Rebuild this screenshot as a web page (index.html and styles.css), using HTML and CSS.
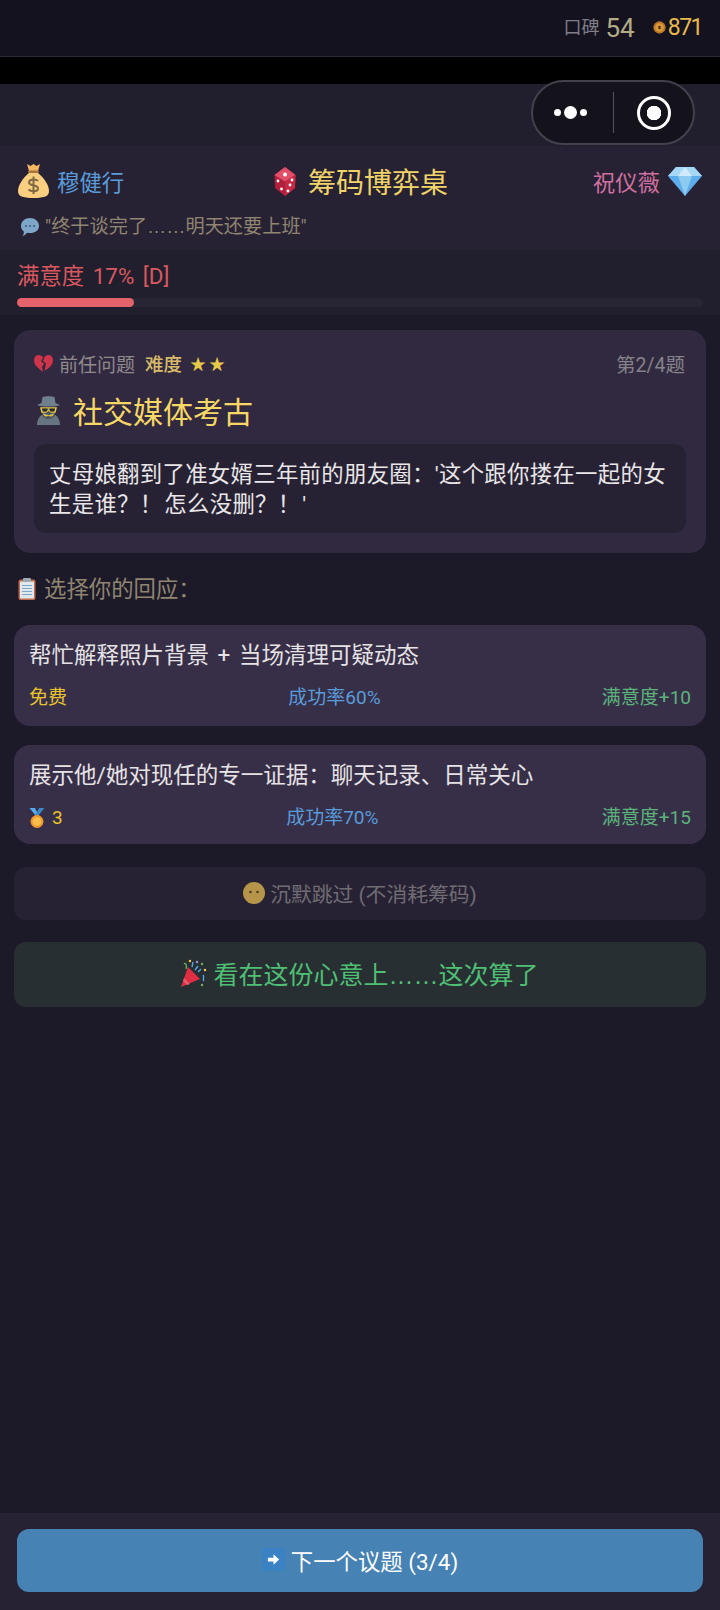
FILE: index.html
```html
<html>
  <head>
    <meta charset="utf-8">
    <link rel="stylesheet" href="styles.css">
  </head>
  <body>
    <div class="app">
      <div class="topbar">
        <span class="rep-label">口碑</span>
        <span class="rep-value">54</span>
        <svg class="ico-coin" viewBox="0 0 12 12"><circle cx="6" cy="6" r="5.700" fill="#b8742a"/><circle cx="6" cy="6" r="4" fill="#dc9a35"/><rect x="5" y="4.500" width="2" height="3" fill="#4a2c10"/></svg>
        <span class="coin-value">871</span>
      </div>
      <div class="blackstrip"></div>
      <div class="navgap"></div>

      <!-- wechat capsule -->
      <div class="capsule">
        <div class="capsule__dots"><i></i><i class="big"></i><i></i></div>
        <div class="capsule__line"></div>
        <div class="capsule__target"><i></i></div>
      </div>

      <header class="table-head">
        <div class="table-head__row">
          <div class="player">
            <svg class="ico-bag" viewBox="0 0 31 34">
              <path d="M9 0 L12.500 2 L15.500 0 L18.500 2 L22 0 L20 7 H11 Z" fill="#f4b860"/>
              <rect x="10" y="6.500" width="11" height="2.500" rx="1" fill="#a9743c"/>
              <path d="M11 9 C5 14 0 21 0 27 C0 32 4 34 15.500 34 C27 34 31 32 31 27 C31 21 26 14 20 9 Z" fill="#fbcf7f"/>
              <path d="M15.500 12.500 V30 M20 17 C18 14.500 11 15 11 18.500 C11 22.500 20 20 20 24.500 C20 28 13 28 10.500 25.500" fill="none" stroke="#7f6a45" stroke-width="2"/>
            </svg>
            <span class="player__name player__name--blue">穆健行</span>
          </div>
          <div class="table-title">
            <svg class="ico-die" viewBox="0 0 22 29">
              <path d="M11 0 L21.500 8 L21 21 L11 29 L1 21 L0.500 8 Z" fill="#b01f3c"/>
              <path d="M11 0 L21.500 8 L11 14.500 L0.500 8 Z" fill="#e24f68"/>
              <path d="M11 14.500 L21.500 8 L21 21 L11 29 Z" fill="#c42843"/>
              <circle cx="11" cy="7.500" r="2" fill="#fff"/><circle cx="4" cy="14" r="1.400" fill="#fff"/><circle cx="7.500" cy="22" r="1.400" fill="#fff"/><circle cx="18" cy="13" r="1.400" fill="#fff"/><circle cx="16" cy="18" r="1.400" fill="#fff"/><circle cx="14" cy="24" r="1.400" fill="#fff"/>
            </svg>
            <span>筹码博弈桌</span>
          </div>
          <div class="player">
            <span class="player__name player__name--pink">祝仪薇</span>
            <svg class="ico-gem" viewBox="0 0 34 29">
              <path d="M8 0 H26 L34 9 L17 29 L0 9 Z" fill="#5dadec"/>
              <path d="M8 0 H26 L34 9 H0 Z" fill="#a6d8f5"/>
              <path d="M10 9 H24 L17 29 Z" fill="#8ccaf0"/>
              <path d="M17 0 L24 9 H10 Z" fill="#cfeafb"/>
            </svg>
          </div>
        </div>
        <div class="quote">
          <svg class="ico-bubble" viewBox="0 0 20 20"><path d="M10 1 C15 1 19 4.500 19 9 C19 13.500 15 16 10 16 C9 16 8 16 7 15.700 C6 17 4.500 18.500 2.500 19 C3.500 17.500 4 16 3.800 14.500 C2 13 1 11 1 9 C1 4.500 5 1 10 1 Z" fill="#7ea6c8"/><circle cx="6" cy="9" r="1" fill="#3d5a75"/><circle cx="10" cy="9" r="1" fill="#3d5a75"/><circle cx="14" cy="9" r="1" fill="#3d5a75"/></svg>
          <span>"终于谈完了<span class="dots">……</span>明天还要上班"</span>
        </div>
      </header>

      <section class="satisfaction">
        <div class="satisfaction__label">满意度 17% [D]</div>
        <div class="satisfaction__track"><div class="satisfaction__fill" style="width:17%"></div></div>
      </section>

      <main class="content">
        <section class="issue">
          <div class="issue__meta">
            <div class="issue__tags">
              <svg class="ico-heart" viewBox="0 0 19 17"><path d="M9 17 C4 13 0 10 0 5 C0 2 2 0 4.500 0 C6.500 0 8 1 9 2.500 L7 6.500 L10 8.500 L8 12 Z" fill="#d0344a"/><path d="M10.500 16 C15 13 19 10 19 5 C19 2 17 0 14.500 0 C13 0 11.500 .8 10.500 2 L9 6 L12 8.500 Z" fill="#d0344a"/></svg>
              <span class="issue__type">前任问题</span>
              <span class="issue__level">难度</span>
              <span class="issue__stars">★★</span>
            </div>
            <span class="issue__count">第2/4题</span>
          </div>
          <h2 class="issue__title">
            <svg class="ico-spy" viewBox="0 0 25 29">
              <path d="M1 29 C1 21 6 17 12.500 17 C19 17 24 21 24 29 Z" fill="#66757f"/>
              <path d="M6 12 H19 V18 C19 21 15 23 12.500 23 C10 23 6 21 6 18 Z" fill="#4b5660"/>
              <path d="M5.500 7 L6.500 1 C9 0 16 0 18.500 1 L19.500 7 L24 9 C20 11 5 11 1 9 Z" fill="#6f7f8c"/>
              <path d="M5 12 H20 L19 16 H15 L12.500 14 L10 16 H6 Z" fill="none" stroke="#e8c84a" stroke-width="1.500"/>
              <path d="M6 12.500 H11.500 L11 15.500 H7 Z M13.500 12.500 H19 L18 15.500 H14 Z" fill="#2b2b2b"/>
              <path d="M7 17 C10 19.500 15 19.500 18 17 C17.500 20.500 15 21.500 12.500 19.500 C10 21.500 7.500 20.500 7 17 Z" fill="#e8c84a"/>
            </svg>
            <span>社交媒体考古</span>
          </h2>
          <p class="issue__text">丈母娘翻到了准女婿三年前的朋友圈：'这个跟你搂在一起的女生是谁？！ 怎么没删？！ '</p>
        </section>

        <div class="choose">
          <svg class="ico-clip" viewBox="0 0 18 22"><rect x="0.500" y="1.500" width="17" height="20.500" rx="2" fill="#c1694f"/><rect x="2" y="3.500" width="14" height="17" fill="#e1e8ed"/><rect x="5" y="0" width="8" height="4" rx="1" fill="#99aab5"/><path d="M4 7.500 H14 M4 10.500 H14 M4 13.500 H14 M4 16.500 H14" stroke="#7aa7c7" stroke-width="1.200"/></svg>
          <span>选择你的回应：</span>
        </div>

        <div class="option">
          <div class="option__text">帮忙解释照片背景 + 当场清理可疑动态</div>
          <div class="option__stats">
            <span class="option__cost">免费</span>
            <span class="option__rate">成功率60%</span>
            <span class="option__gain">满意度+10</span>
          </div>
        </div>
        <div class="option option--second">
          <div class="option__text">展示他/她对现任的专一证据：聊天记录、日常关心</div>
          <div class="option__stats">
            <span class="option__cost">
              <svg class="ico-medal" viewBox="0 0 16 20"><path d="M0.500 0 H6 L10 8 H7 Z" fill="#55acee"/><path d="M15.500 0 H10 L6 8 H9 Z" fill="#3b88c3"/><circle cx="8" cy="13.500" r="6.500" fill="#f09a2e"/><circle cx="8" cy="13.500" r="4.300" fill="#fbc04c"/></svg>
              3
            </span>
            <span class="option__rate">成功率70%</span>
            <span class="option__gain">满意度+15</span>
          </div>
        </div>

        <div class="skip">
          <svg class="ico-face" viewBox="0 0 22 22"><circle cx="11" cy="11" r="11" fill="#b5954a"/><circle cx="7.500" cy="10" r="1.300" fill="#4c3c20"/><circle cx="14.500" cy="10" r="1.300" fill="#4c3c20"/></svg>
          <span>沉默跳过 (不消耗筹码)</span>
        </div>

        <div class="forgive">
          <svg class="ico-party" viewBox="0 0 26 28">
            <path d="M0 28 L7 8 L19 20 Z" fill="#dd2e44"/>
            <path d="M3 19 L9 25 L6 26 L2 22 Z" fill="#ea596e"/>
            <path d="M3 5 C5 3 6 7 5 10" fill="none" stroke="#77b255" stroke-width="1.300"/>
            <path d="M12 3 L11 8 M17 7 L14 11 M20 10 L17 13 M22 16 C24 18 21 20 23 22" fill="none" stroke="#55acee" stroke-width="1.300"/>
            <circle cx="16" cy="3" r="1.200" fill="#aa8dd8"/><circle cx="21" cy="5" r="1.200" fill="#77b255"/><circle cx="24" cy="11" r="1.200" fill="#ffcc4d"/><circle cx="21" cy="26" r="1.200" fill="#77b255"/><circle cx="9" cy="2" r="1.200" fill="#ffcc4d"/>
          </svg>
          <span>看在这份心意上<span class="dots">……</span>这次算了</span>
        </div>
      </main>

      <footer class="footer">
        <button class="next">
          <span class="next__arrow"><svg viewBox="0 0 16 16"><path d="M2 6 H8 V2.500 L14 8 L8 13.500 V10 H2 Z" fill="#fff"/></svg></span>
          <span>下一个议题 (3/4)</span>
        </button>
      </footer>
    </div>
  </body>
</html>
```

FILE: styles.css
```css
* {
  padding: 0;
  margin: 0;
  box-sizing: border-box;
}

html, body {
  height: 100%;
}

body {
  background: #1c1928;
  font-family: Roboto, "Noto Sans CJK SC", sans-serif;
}

svg {
  display: block;
  flex-shrink: 0;
}

.app {
  position: relative;
  height: 1610px;
  display: flex;
  flex-direction: column;
}

/* the wide baseline dots of the reference */
.dots {
  font-family: "Liberation Sans", sans-serif;
}

/* top bar */
.topbar {
  height: 57px;
  background: #14121f;
  border-bottom: 1px solid #2b2936;
  display: flex;
  align-items: center;
  justify-content: flex-end;
  padding: 0 18px 1px 0;
}

.rep-label {
  font-size: 18px;
  color: #7f7d85;
  margin-right: 6px;
  margin-bottom: 3px;
}

.rep-value {
  font-size: 26px;
  color: #b3ab85;
  margin-right: 18px;
}

.ico-coin {
  width: 13px;
  height: 13px;
  margin-right: 2px;
}

.coin-value {
  font-size: 23px;
  letter-spacing: -1.500px;
  color: #e7b94e;
}

.blackstrip {
  height: 27px;
  background: #000;
}

.navgap {
  height: 62px;
  background: #211e2e;
}

/* capsule */
.capsule {
  position: absolute;
  left: 531px;
  top: 80px;
  width: 164px;
  height: 65px;
  background: #14121b;
  border: 2px solid #43414c;
  border-radius: 33px;
  display: flex;
  align-items: center;
}

.capsule__dots {
  width: 80px;
  display: flex;
  align-items: center;
  justify-content: center;
  gap: 3px;
  padding-right: 5px;
}

.capsule__dots i {
  width: 7px;
  height: 7px;
  background: #fff;
  border-radius: 50%;
}

.capsule__dots i.big {
  width: 13px;
  height: 13px;
}

.capsule__line {
  width: 1px;
  height: 41px;
  background: #55535c;
}

.capsule__target {
  flex: 1;
  display: flex;
  justify-content: center;
  padding-left: 1px;
}

.capsule__target i {
  width: 34px;
  height: 34px;
  border: 3px solid #fff;
  border-radius: 50%;
  background: radial-gradient(circle, #fff 0 7px, transparent 7.500px);
}

/* table header */
.table-head {
  height: 104px;
  background: #272233;
  padding: 17px 18px 0 18px;
}

.table-head__row {
  display: flex;
  align-items: center;
  justify-content: space-between;
  height: 36px;
}

.player {
  display: flex;
  align-items: center;
  gap: 8px;
}

.player__name {
  font-size: 22.400px;
}

.player__name--blue {
  color: #5a9bd9;
}

.player__name--pink {
  color: #d0709f;
}

.ico-bag {
  width: 31px;
  height: 34px;
}

.ico-gem {
  width: 34px;
  height: 29px;
}

.table-title {
  display: flex;
  align-items: center;
  gap: 12px;
  font-size: 28px;
  color: #f1d469;
  margin-right: -5px;
}

.ico-die {
  width: 22px;
  height: 29px;
}

.quote {
  display: flex;
  align-items: center;
  gap: 5px;
  margin-top: 15px;
  padding-left: 2px;
  font-size: 19.200px;
  line-height: 26px;
  color: #8f8570;
}

.ico-bubble {
  width: 20px;
  height: 20px;
}

/* satisfaction */
.satisfaction {
  height: 65px;
  background: #211e2e;
  padding: 11px 17px 0 17px;
}

.satisfaction__label {
  font-size: 22.400px;
  line-height: 30px;
  word-spacing: 3px;
  color: #d9595f;
}

.satisfaction__track {
  height: 9px;
  margin-top: 7px;
  background: #282534;
  border-radius: 5px;
}

.satisfaction__fill {
  height: 9px;
  background: #e4626a;
  border-radius: 5px;
}

/* content */
.content {
  flex: 1;
  padding: 15px 14px 0 14px;
}

.issue {
  height: 223px;
  background: #30293f;
  border-radius: 16px;
  padding: 20px 20px 0 20px;
}

.issue__meta {
  display: flex;
  align-items: center;
  justify-content: space-between;
  height: 26px;
}

.issue__tags {
  display: flex;
  align-items: center;
}

.ico-heart {
  width: 19px;
  height: 17px;
  margin-right: 6px;
}

.issue__type {
  font-size: 19px;
  color: #8f8a8c;
  margin-right: 10px;
}

.issue__level {
  font-size: 18.500px;
  font-weight: 500;
  color: #d9bc6a;
  margin-right: 8px;
}

.issue__stars {
  font-size: 16px;
  letter-spacing: 3px;
  color: #e8c84a;
}

.issue__count {
  font-size: 19.500px;
  margin-right: 1px;
  color: #85828a;
}

.issue__title {
  display: flex;
  align-items: center;
  gap: 12px;
  margin-top: 14px;
  height: 40px;
  font-size: 30px;
  font-weight: 400;
  color: #f7d765;
}

.ico-spy {
  width: 25px;
  height: 29px;
  margin-left: 2px;
}

.issue__text {
  height: 89px;
  margin-top: 14px;
  background: #272233;
  border-radius: 12px;
  padding: 15px 15px 0 15px;
  font-size: 22.400px;
  line-height: 30px;
  letter-spacing: 0.300px;
  word-spacing: -4px;
  color: #e9e7e9;
}

.choose {
  display: flex;
  align-items: center;
  gap: 8px;
  margin-top: 22px;
  height: 28px;
  font-size: 22.400px;
  line-height: 26px;
  color: #8f8570;
}

.ico-clip {
  width: 18px;
  height: 22px;
  margin-left: 4px;
}

.option {
  height: 101px;
  margin-top: 22px;
  background: #372f48;
  border-radius: 16px;
  padding: 15px 15px 0 15px;
}

.option--second {
  height: 99px;
  margin-top: 19px;
}

.option__text {
  font-size: 22.500px;
  line-height: 30px;
  word-spacing: 3px;
  color: #e6e3e6;
}

.option__stats {
  display: flex;
  justify-content: space-between;
  align-items: center;
  margin-top: 15px;
  font-size: 19px;
  line-height: 26px;
}

.option__cost {
  display: flex;
  align-items: center;
  gap: 7px;
  color: #e8c22f;
}

.ico-medal {
  width: 16px;
  height: 20px;
}

.option__rate {
  color: #5a9bd9;
}

.option__gain {
  color: #5cb37c;
}

.skip {
  height: 53px;
  margin-top: 23px;
  padding-bottom: 1px;
  background: #272233;
  border-radius: 12px;
  display: flex;
  align-items: center;
  justify-content: center;
  gap: 5px;
  font-size: 20.800px;
  color: #6f6c73;
}

.ico-face {
  width: 22px;
  height: 22px;
}

.forgive {
  height: 65px;
  margin-top: 22px;
  padding-bottom: 4px;
  background: #272f33;
  border-radius: 12px;
  display: flex;
  align-items: center;
  justify-content: center;
  gap: 6px;
  font-size: 25px;
  color: #4fbf73;
}

.ico-party {
  width: 26px;
  height: 28px;
}

/* footer */
.footer {
  height: 97px;
  background: #272233;
  padding: 16px 17px 0 17px;
}

.next {
  width: 100%;
  height: 63px;
  padding-bottom: 2px;
  background: #4682b4;
  border: 0;
  border-radius: 12px;
  display: flex;
  align-items: center;
  justify-content: center;
  gap: 6px;
  font-family: inherit;
  font-size: 22.400px;
  color: #fff;
}

.next__arrow {
  width: 23px;
  height: 23px;
  background: #3b82c4;
  display: flex;
  align-items: center;
  justify-content: center;
}

.next__arrow svg {
  width: 15px;
  height: 15px;
}
```
